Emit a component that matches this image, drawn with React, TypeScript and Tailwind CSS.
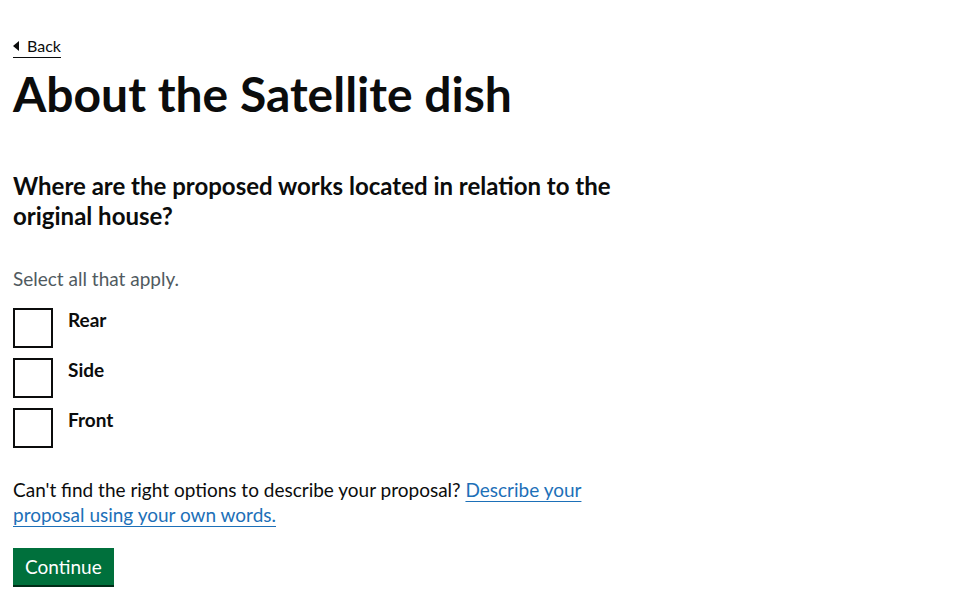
export default function App() {
  const options = ['Rear', 'Side', 'Front']

  return (
    <div className="min-h-screen bg-white text-[#0b0c0c] pl-[13px] pt-[33px]" style={{ fontFamily: 'Lato, "Liberation Sans", Arial, sans-serif' }}>
      {/* back link */}
      <a href="#" className="inline-flex items-center gap-[8px] text-[16px] leading-[20px] text-[#0b0c0c] border-b border-[#0b0c0c] pb-[1px]">
        <span className="w-0 h-0 border-y-[5px] border-y-transparent border-r-[6px] border-r-[#0b0c0c]" />
        Back
      </a>

      <h1 className="mt-[11px] text-[48px] leading-[50px] font-bold">About the Satellite dish</h1>

      <div className="mt-[52px] w-[640px]">
        <h2 className="w-[620px] text-[24px] leading-[30px] font-bold">
          Where are the proposed works located in relation to the original house?
        </h2>

        <p className="mt-[35px] text-[19px] leading-[25px] text-[#505a5f]">Select all that apply.</p>

        <div className="mt-[17px] flex flex-col gap-[10px]">
          {options.map((o) => (
            <label key={o} className="flex items-start gap-[15px]">
              <span className="w-[40px] h-[40px] border-2 border-[#0b0c0c] bg-white" />
              <span className="-mt-[1px] text-[19px] leading-[25px] font-bold">{o}</span>
            </label>
          ))}
        </div>

        <p className="mt-[29px] w-[570px] text-[19px] leading-[25px]">
          Can't find the right options to describe your proposal?{' '}
          <a href="#" className="text-[#1d70b8] underline underline-offset-[4px]">
            Describe your proposal using your own words.
          </a>
        </p>

        <button className="mt-[21px] bg-[#00703c] text-white text-[19px] leading-[19px] px-[12px] pt-[9px] pb-[9px] shadow-[0_2px_0_#002d18]">
          Continue
        </button>
      </div>
    </div>
  )
}
